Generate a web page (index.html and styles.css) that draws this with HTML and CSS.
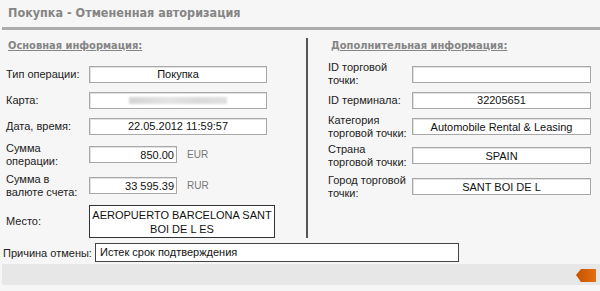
FILE: index.html
```html
<!DOCTYPE html>
<html lang="ru">
<head>
    <meta charset="UTF-8">
    <title>Покупка - Отмененная авторизация</title>
    <link rel="stylesheet" href="styles.css">
</head>
<body>
    <div class="panel">
        <div class="panel-title">Покупка - Отмененная авторизация</div>
        <div class="columns">
            <div class="col col-main">
                <div class="col-head">Основная информация:</div>
                <div class="row">
                    <span class="label">Тип операции:</span>
                    <span class="field">Покупка</span>
                </div>
                <div class="row">
                    <span class="label">Карта:</span>
                    <span class="field"><span class="masked"></span></span>
                </div>
                <div class="row">
                    <span class="label">Дата, время:</span>
                    <span class="field">22.05.2012 11:59:57</span>
                </div>
                <div class="row row-tall">
                    <span class="label">Сумма<br>операции:</span>
                    <span class="field field-sum">850.00</span>
                    <span class="currency">EUR</span>
                </div>
                <div class="row row-tall">
                    <span class="label">Сумма в<br>валюте счета:</span>
                    <span class="field field-sum">33 595.39</span>
                    <span class="currency">RUR</span>
                </div>
                <div class="row row-place">
                    <span class="label">Место:</span>
                    <span class="field field-place">AEROPUERTO BARCELONA SANT<br>BOI DE L ES</span>
                </div>
            </div>
            <div class="col col-extra">
                <div class="col-head">Дополнительная информация:</div>
                <div class="row">
                    <span class="label">ID торговой<br>точки:</span>
                    <span class="field"></span>
                </div>
                <div class="row">
                    <span class="label">ID терминала:</span>
                    <span class="field">32205651</span>
                </div>
                <div class="row row-mid">
                    <span class="label">Категория<br>торговой точки:</span>
                    <span class="field">Automobile Rental &amp; Leasing</span>
                </div>
                <div class="row row-tall">
                    <span class="label">Страна<br>торговой точки:</span>
                    <span class="field">SPAIN</span>
                </div>
                <div class="row row-tall">
                    <span class="label">Город торговой<br>точки:</span>
                    <span class="field">SANT BOI DE L</span>
                </div>
            </div>
        </div>
        <div class="reason">
            <span class="reason-label">Причина отмены:</span>
            <span class="reason-field">Истек срок подтверждения</span>
        </div>
        <div class="panel-footer">
            <svg class="back-tag" width="20" height="14" viewBox="0 0 20 14">
                <defs>
                    <linearGradient id="tagFill" x1="0" y1="0" x2="1" y2="0">
                        <stop offset="0" stop-color="#c65200"/>
                        <stop offset="1" stop-color="#e2700e"/>
                    </linearGradient>
                </defs>
                <polygon points="0,7 5,1 20,1 20,14 5,14" fill="url(#tagFill)"/>
            </svg>
        </div>
    </div>
</body>
</html>
```

FILE: styles.css
```css
body {
    margin: 0;
    background-color: #f6f6f6;
    font-family: "Liberation Sans", Arial, sans-serif;
    font-size: 11px;
    color: #1e1e1e;
}
.panel {
    margin-left: 2px;
}
.panel-title {
    height: 27px;
    line-height: 26px;
    padding-left: 6px;
    font-family: "DejaVu Sans Condensed", "DejaVu Sans", sans-serif;
    font-stretch: condensed;
    font-weight: bold;
    font-size: 12.5px;
    color: #858585;
    border-bottom: 3px solid #acacac;
}
.columns {
    display: flex;
    margin-top: 8px;
}
.col-main {
    width: 300px;
    padding-left: 4px;
}
.col-extra {
    border-left: 2px solid #555;
    padding-left: 20px;
}
.col-head {
    line-height: 16px;
    margin-bottom: 7px;
    margin-left: 2px;
    font-family: "DejaVu Sans Condensed", "DejaVu Sans", sans-serif;
    font-stretch: condensed;
    font-weight: bold;
    font-size: 11px;
    color: #858585;
    text-decoration: underline;
}
.col-extra .col-head {
    margin-left: 3px;
}
.row {
    display: flex;
    align-items: center;
    min-height: 26px;
}
.row-mid {
    min-height: 27px;
}
.row-tall {
    min-height: 31px;
}
.label {
    width: 83px;
    flex-shrink: 0;
    line-height: 13px;
    white-space: nowrap;
    color: #222;
}
.col-extra .label {
    width: 84px;
}
.field {
    display: flex;
    align-items: center;
    justify-content: center;
    flex-shrink: 0;
    box-sizing: border-box;
    width: 178px;
    height: 17px;
    background-color: #fff;
    border: 1px solid #a8a8a8;
    box-shadow: inset 1px 1px 0 #e2e2e2;
    white-space: nowrap;
    color: #111;
}
.col-extra .field {
    width: 179px;
}
.field-sum {
    width: 88px;
    justify-content: flex-end;
    padding-right: 2px;
}
.currency {
    margin-left: 10px;
    font-size: 10px;
    color: #777;
}
.masked {
    width: 98px;
    height: 7px;
    background: linear-gradient(to right, #d4d4d4, #e4e4e4 40%, #dadada 70%, #e0e0e0);
    filter: blur(1px);
}
.row-place {
    margin-top: 4px;
}
.field-place {
    width: 186px;
    height: 33px;
    line-height: 14px;
    text-align: center;
    border-color: #333;
    box-shadow: none;
}
.reason {
    display: flex;
    align-items: center;
    margin-top: 5px;
}
.reason-label {
    width: 92px;
    padding-left: 1px;
    white-space: nowrap;
    color: #222;
}
.reason-field {
    box-sizing: border-box;
    width: 364px;
    height: 19px;
    line-height: 17px;
    padding-left: 4px;
    background-color: #fff;
    border: 1px solid #444;
    color: #111;
}
.panel-footer {
    display: flex;
    align-items: center;
    justify-content: flex-end;
    height: 21px;
    margin-top: 2px;
    padding-right: 4px;
    background-color: #e7e7e7;
}
.back-tag {
    display: block;
}
```
